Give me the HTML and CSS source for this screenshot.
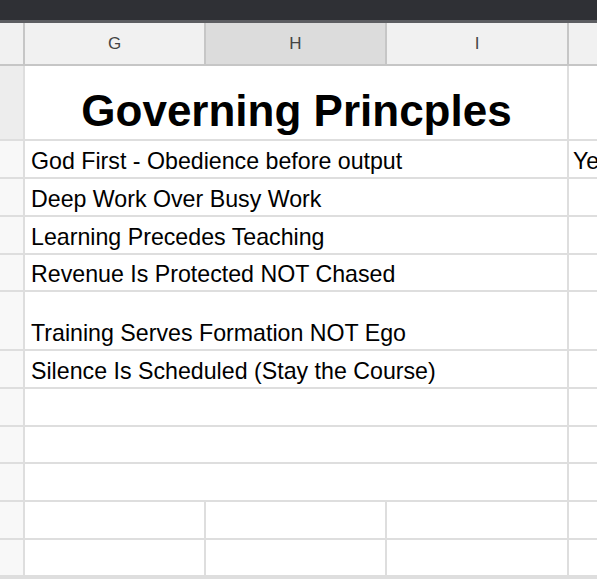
FILE: index.html
```html
<!DOCTYPE html>
<html>
<head>
<meta charset="utf-8">
<link rel="stylesheet" href="styles.css">
</head>
<body>
<div class="topbar"></div>
<div class="colheads">
  <div class="ch corner"></div>
  <div class="ch">G</div>
  <div class="ch sel">H</div>
  <div class="ch">I</div>
  <div class="ch"></div>
</div>
<div class="grid">
  <div class="rh rh-sel r-title"></div>
  <div class="cell merged title r-title">Governing Princples</div>
  <div class="cell r-title"></div>

  <div class="rh"></div>
  <div class="cell merged">God First - Obedience before output</div>
  <div class="cell jcell">Ye</div>

  <div class="rh"></div>
  <div class="cell merged">Deep Work Over Busy Work</div>
  <div class="cell"></div>

  <div class="rh"></div>
  <div class="cell merged">Learning Precedes Teaching</div>
  <div class="cell"></div>

  <div class="rh"></div>
  <div class="cell merged">Revenue Is Protected NOT Chased</div>
  <div class="cell"></div>

  <div class="rh"></div>
  <div class="cell merged">Training Serves Formation NOT Ego</div>
  <div class="cell"></div>

  <div class="rh"></div>
  <div class="cell merged">Silence Is Scheduled (Stay the Course)</div>
  <div class="cell"></div>

  <div class="rh"></div>
  <div class="cell merged"></div>
  <div class="cell"></div>

  <div class="rh"></div>
  <div class="cell merged"></div>
  <div class="cell"></div>

  <div class="rh"></div>
  <div class="cell merged"></div>
  <div class="cell"></div>

  <div class="rh"></div>
  <div class="cell"></div>
  <div class="cell"></div>
  <div class="cell"></div>
  <div class="cell"></div>

  <div class="rh"></div>
  <div class="cell"></div>
  <div class="cell"></div>
  <div class="cell"></div>
  <div class="cell"></div>
</div>
</body>
</html>
```
FILE: styles.css
```css
html, body {
  margin: 0;
  padding: 0;
  background: #ffffff;
  overflow: hidden;
  width: 597px;
  height: 579px;
  font-family: "Liberation Sans", Arial, sans-serif;
}

.topbar {
  height: 20px;
  background: #2f3035;
  border-bottom: 3px solid #5c5d61;
}

.colheads {
  display: grid;
  grid-template-columns: 23px 179px 179px 180px 1fr;
  column-gap: 2px;
  height: 41px;
  background: #c6c6c6;
  border-bottom: 2px solid #c6c6c6;
}

.ch {
  background: #f1f1f1;
  color: #444444;
  font-size: 17px;
  display: flex;
  align-items: center;
  justify-content: center;
  padding-top: 1px;
}

.ch.sel {
  background: #dcdcdc;
}

.grid {
  display: grid;
  grid-template-columns: 23px 179px 179px 180px 1fr;
  grid-template-rows: 73px 36px 36px 36px 35px 57px 36px 36px 35px 36px 36px 35px;
  gap: 2px;
  background: #dedede;
  height: 514px;
  overflow: hidden;
}

.rh {
  background: #f8f8f8;
  grid-column: 1;
}

.rh-sel {
  background: #ededed;
}

.cell {
  background: #ffffff;
  display: flex;
  align-items: flex-end;
  padding: 0 5px 2px 6px;
  font-size: 23.2px;
  color: #000000;
  white-space: nowrap;
  overflow: hidden;
}

.merged {
  grid-column: 2 / span 3;
}

.title {
  justify-content: center;
  font-size: 44px;
  font-weight: bold;
  padding-bottom: 3px;
}

.jcell {
  padding-left: 4px;
}
```
